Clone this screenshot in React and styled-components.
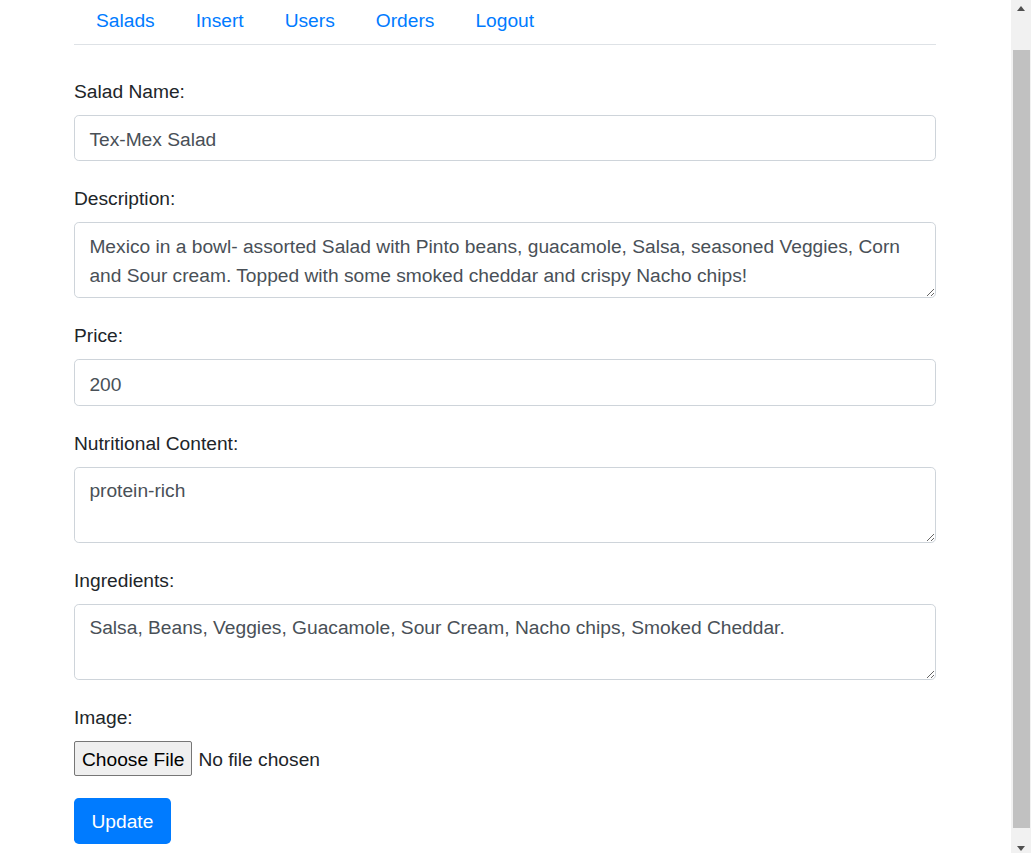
import React from 'react';
import styled, { createGlobalStyle } from 'styled-components';

const GlobalStyle = createGlobalStyle`
	html, body {
		margin: 0;
		padding: 0;
		overflow: hidden;
		background: #fff;
	}
	body {
		font-family: "Liberation Sans", Arial, sans-serif;
		font-size: 19.2px;
		line-height: 28.8px;
		color: #212529;
	}
	* { box-sizing: border-box; }
`

const links = ['Salads', 'Insert', 'Users', 'Orders', 'Logout'];

const App = () => {
	return (
		<>
		<GlobalStyle />
		<Page>
			<Main>
				<Container>
					<Nav>
						{links.map(l => (
							<NavLink key={l} href="#">{l}</NavLink>
						))}
					</Nav>
					<Form onSubmit={e => e.preventDefault()}>
						<Group>
							<Label>Salad Name:</Label>
							<Input type="text" defaultValue="Tex-Mex Salad" />
						</Group>
						<Group>
							<Label>Description:</Label>
							<TextArea rows={2} defaultValue="Mexico in a bowl- assorted Salad with Pinto beans, guacamole, Salsa, seasoned Veggies, Corn and Sour cream. Topped with some smoked cheddar and crispy Nacho chips!" />
						</Group>
						<Group>
							<Label>Price:</Label>
							<Input type="text" defaultValue="200" />
						</Group>
						<Group>
							<Label>Nutritional Content:</Label>
							<TextArea rows={2} defaultValue="protein-rich" />
						</Group>
						<Group>
							<Label>Ingredients:</Label>
							<TextArea rows={2} defaultValue="Salsa, Beans, Veggies, Guacamole, Sour Cream, Nacho chips, Smoked Cheddar." />
						</Group>
						<Group>
							<Label>Image:</Label>
							<FileInput type="file" />
						</Group>
						<Button type="submit">Update</Button>
					</Form>
				</Container>
			</Main>
			<ScrollBar>
				<Arrow><ArrowUp /></Arrow>
				<Track>
					<Thumb />
				</Track>
				<Arrow><ArrowDown /></Arrow>
			</ScrollBar>
		</Page>
		</>
	);
}

export default App;

// styles
const Page = styled.div`
	display: flex;
	height: 853px;
	overflow: hidden;
`
const Main = styled.div`
	flex: 1;
	overflow: hidden;
`
const Container = styled.div`
	width: 862px;
	margin-left: 74px;
`
const Nav = styled.nav`
	display: flex;
	padding-left: 4px;
	gap: 5px;
	border-bottom: 1px solid #dee2e6;
`
const NavLink = styled.a`
	display: block;
	padding: 6.6px 18px 8.6px;
	color: #007bff;
	text-decoration: none;
`
const Form = styled.form`
	padding-top: 31px;
`
const Group = styled.div`
	margin-bottom: 22px;
`
const Label = styled.label`
	display: block;
	line-height: 29px;
	padding-top: 1px;
	margin-bottom: 9px;
`
const fieldBase = `
	display: block;
	width: 100%;
	font-family: inherit;
	font-size: 19.2px;
	line-height: 28.8px;
	color: #495057;
	background: #fff;
	border: 1px solid #ced4da;
	border-radius: 4.8px;
	padding: 9.4px 14.4px 5px;
	outline: none;
`
const Input = styled.input`
	${fieldBase}
	height: 46.5px;
`
const TextArea = styled.textarea`
	${fieldBase}
	height: 76px;
	resize: vertical;
`
const FileInput = styled.input`
	display: block;
	font-family: inherit;
	font-size: 19.2px;
	color: #212529;
	height: 35px;
	&::file-selector-button {
		font-family: inherit;
		font-size: 19.2px;
		color: #000;
		height: 35px;
		padding: 3px 7px 0;
		margin-right: 6px;
		background: #efefef;
		border: 1px solid #767676;
		border-radius: 2px;
	}
`
const Button = styled.button`
	display: inline-block;
	height: 46px;
	padding: 3px 17.5px 0;
	font-family: inherit;
	font-size: 19.2px;
	color: #fff;
	background: #007bff;
	border: none;
	border-radius: 4.8px;
`
const ScrollBar = styled.div`
	width: 20px;
	display: flex;
	flex-direction: column;
	background: #f1f1f1;
`
const Arrow = styled.div`
	height: 17px;
	display: flex;
	align-items: center;
	justify-content: center;
`
const ArrowUp = styled.span`
	width: 0;
	height: 0;
	border-left: 4.5px solid transparent;
	border-right: 4.5px solid transparent;
	border-bottom: 5px solid #505050;
`
const ArrowDown = styled.span`
	width: 0;
	height: 0;
	border-left: 4.5px solid transparent;
	border-right: 4.5px solid transparent;
	border-top: 5px solid #505050;
	margin-top: 7px;
`
const Track = styled.div`
	flex: 1;
	padding: 33px 1px 0 2px;
`
const Thumb = styled.div`
	height: 778px;
	background: #c1c1c1;
`
